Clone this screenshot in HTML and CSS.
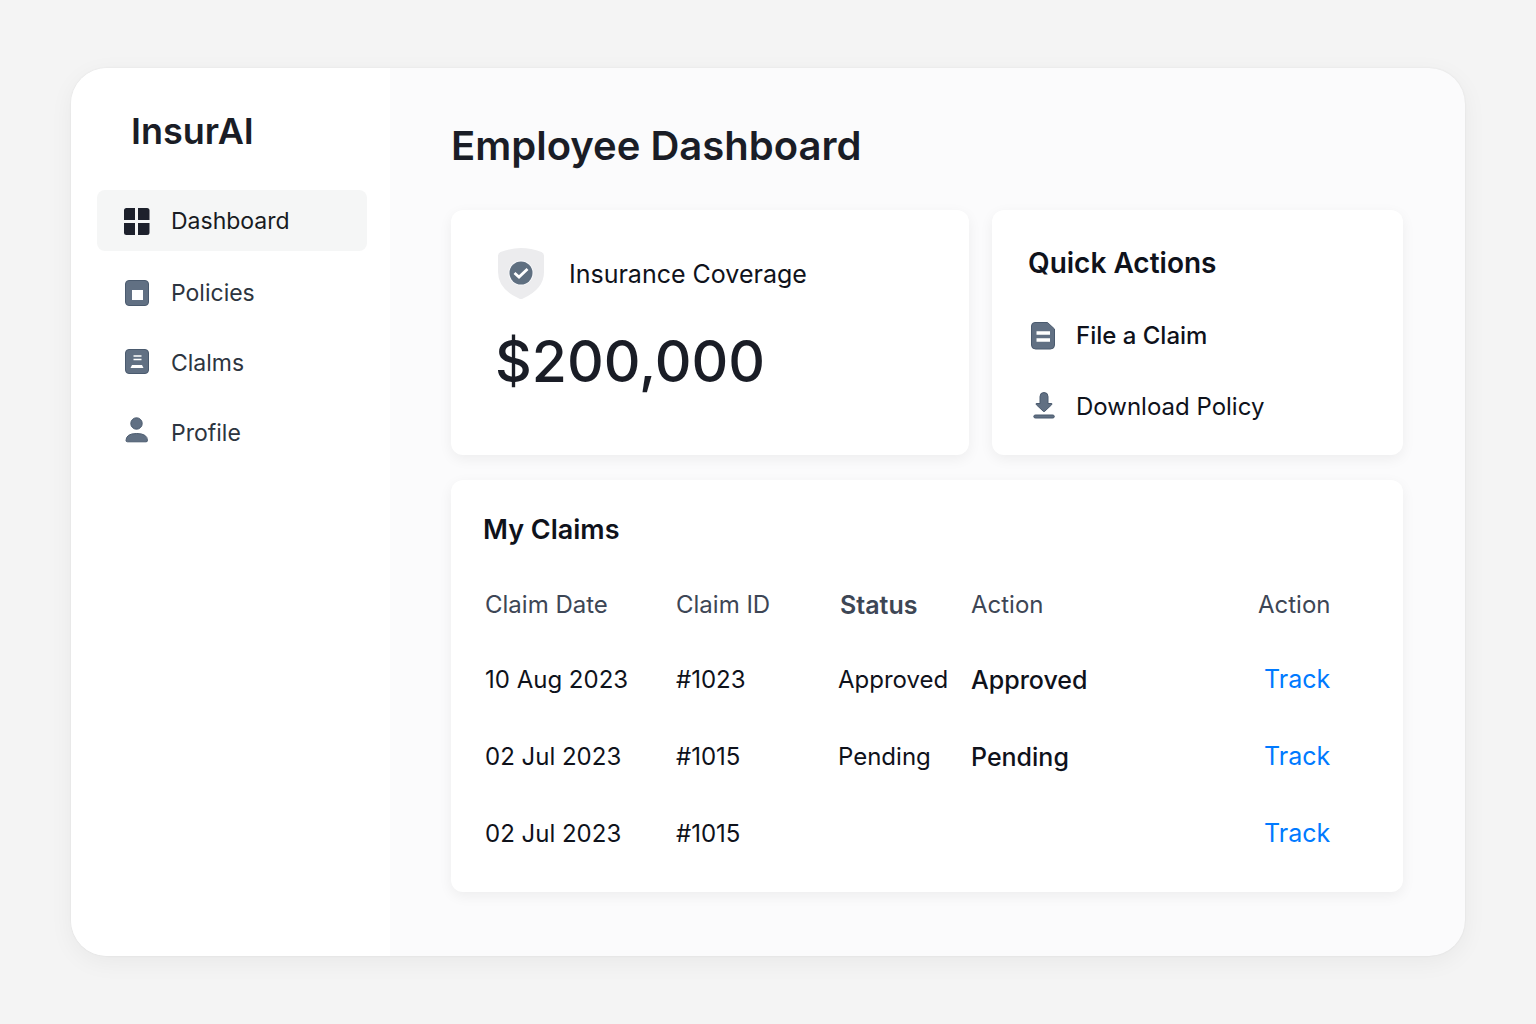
FILE: index.html
```html
<!DOCTYPE html>
<html lang="en">
<head>
<meta charset="utf-8">
<meta name="viewport" content="width=device-width, initial-scale=1">
<title>InsurAI – Employee Dashboard</title>
<link rel="stylesheet" href="styles.css">
</head>
<body>
<div class="app">
  <aside class="sidebar">
    <div class="brand">InsurAI</div>
    <nav class="nav">
      <a class="nav-link active" href="#dashboard">
        <svg class="icon" viewBox="0 0 28 28"><path fill="#1d212c" d="M3.5 1H12v12H1V3.500Q1 1 3.500 1zM15 1h9q2.500 0 2.500 2.500V13H15zM1 16h11v12H3.500Q1 28 1 25.500zM15 16h11.500v9.500q0 2.500-2.500 2.500h-9z"/></svg>
        Dashboard</a>
      <a class="nav-link" href="#policies">
        <svg class="icon" viewBox="0 1 28 28"><rect x="2.500" y="2.500" width="23" height="25" rx="3.500" fill="#617083" stroke="#4a5a6e"/><rect x="9" y="12" width="11" height="10" fill="#fff"/></svg>
        Policies</a>
      <a class="nav-link" href="#claims">
        <svg class="icon" viewBox="0 1 28 28"><rect x="2.500" y="1.500" width="23" height="24" rx="3.500" fill="#617083" stroke="#4a5a6e"/><path d="M10.500 8h8M10.500 11.500h8" stroke="#fff" stroke-width="1.500"/><path d="M9 17h10l1.500 3h-13z" fill="#fff"/></svg>
        Clalms</a>
      <a class="nav-link" href="#profile">
        <svg class="icon" viewBox="0 1 28 28"><g fill="#617083" stroke="#4a5a6e"><circle cx="13.500" cy="5.500" r="5.700"/><path d="M3 22.500q0-7 10.700-7t10.800 7q0 1.300-1.500 1.300H4.500Q3 23.800 3 22.500z"/></g></svg>
        Profile</a>
    </nav>
  </aside>
  <main class="main">
    <h1 class="title">Employee Dashboard</h1>
    <div class="cards">
      <section class="card coverage">
        <div class="coverage-head">
          <svg class="shield" viewBox="0 0 50 52"><path fill="#ececee" d="M26 0Q36 0 46.500 4Q49 5 49 8V24Q49 41 28 50.500Q26 51.500 24 50.500Q3 41 3 24V8Q3 5 5.500 4Q16 0 26 0z"/><circle cx="26" cy="25" r="12.500" fill="#f8f8fa"/><circle cx="26" cy="25" r="11.500" fill="#5f6f80"/><path d="M19.500 25l4.500 4 8.500-8" fill="none" stroke="#fff" stroke-width="2.800"/></svg>
          <h2 class="coverage-label">Insurance Coverage</h2>
        </div>
        <p class="amount">$200,000</p>
      </section>
      <section class="card quick">
        <h2 class="heading">Quick Actions</h2>
        <button class="action strong" type="button">
          <svg class="icon" viewBox="0 0 28 28"><path fill="#617083" stroke="#4a5a6e" d="M7 .5h12.500l7 6.500v16q0 4-4 4H7.500q-4 0-4-4V4q0-3.500 3.500-3.500z"/><path d="M8.500 11H22M8.500 18H22" stroke="#fff" stroke-width="3.600"/></svg>
          File a Claim</button>
        <button class="action" type="button">
          <svg class="icon" viewBox="0 0 28 28"><g fill="#617083" stroke="#4a5a6e" stroke-linejoin="round"><path d="M12 3.500q0-4 4-4t4 4v7h3q1.800 0 .6 1.300L16.500 18.500q-.5.500-1 0L8.400 11.800q-1.200-1.300.6-1.300h3z"/><rect x="5.800" y="22" width="20.500" height="3" rx="1.500"/></g></svg>
          Download Policy</button>
      </section>
    </div>
    <section class="card claims">
      <h2 class="heading">My Claims</h2>
      <table class="table">
        <colgroup><col class="c-date"><col class="c-id"><col class="c-status"><col><col class="c-track"></colgroup>
        <thead><tr><th>Claim Date</th><th>Claim ID</th><th class="semi">Status</th><th>Action</th><th>Action</th></tr></thead>
        <tbody>
          <tr><td>10 Aug 2023</td><td>#1023</td><td>Approved</td><td class="medium">Approved</td><td><a class="track" href="#track-1">Track</a></td></tr>
          <tr><td>02 Jul 2023</td><td>#1015</td><td>Pending</td><td class="medium">Pending</td><td><a class="track" href="#track-2">Track</a></td></tr>
          <tr><td>02 Jul 2023</td><td>#1015</td><td></td><td></td><td><a class="track" href="#track-3">Track</a></td></tr>
        </tbody>
      </table>
    </section>
  </main>
</div>
</body>
</html>
```
FILE: styles.css
```css
* { box-sizing: border-box; }
body {
  margin: 0;
  min-height: 100vh;
  padding: 68px 71px;
  display: flex;
  background: #f4f4f4;
  color: #0f121b;
  font: 400 24px/32px Inter, "Liberation Sans", sans-serif;
}
h1, h2, p { margin: 0; }
.app {
  flex: 1;
  display: flex;
  border-radius: 36px;
  overflow: hidden;
  background: #fbfbfc;
  box-shadow: 0 0 2px rgba(0, 0, 0, .08), 0 6px 24px rgba(0, 0, 0, .05);
}
.sidebar { width: 319px; flex: none; padding: 39px 23px 39px 26px; background: #fff; }
.brand { padding-left: 34px; color: #1a1d26; font-size: 36px; font-weight: 600; line-height: 48px; }
.nav { display: flex; flex-direction: column; gap: 9px; margin-top: 35px; }
.nav-link {
  height: 61px;
  padding: 0 26px;
  display: flex;
  align-items: center;
  gap: 20px;
  border-radius: 8px;
  color: #2d3540;
  font-size: 23px;
  text-decoration: none;
}
.nav-link.active { margin-bottom: 2px; background: #f5f6f6; color: #181b22; }
.icon { width: 28px; height: 28px; flex: none; overflow: visible; }
.main { flex: 1; min-width: 0; padding: 52px 62px 64px 61px; }
.title { color: #1a1d26; font-size: 40px; font-weight: 600; line-height: 52px; }
.cards { display: grid; grid-template-columns: 518fr 411fr; gap: 23px; margin: 38px 0 25px; }
.card { border-radius: 12px; background: #fff; box-shadow: 0 4px 14px rgba(0, 0, 0, .06); }
.coverage { padding: 38px 44px; }
.coverage-head { display: flex; align-items: center; gap: 24px; }
.shield { width: 50px; height: 52px; }
.coverage-label { font-size: 25px; font-weight: 400; }
.amount { margin-top: 24px; color: #1a1d26; font-size: 57px; font-weight: 500; line-height: 76px; }
.heading { font-size: 28px; font-weight: 600; line-height: 36px; }
.quick { padding: 35px 36px 32px; }
.action {
  display: flex;
  align-items: center;
  gap: 20px;
  margin: 39px 0 0;
  padding: 0;
  border: 0;
  background: none;
  color: inherit;
  font: inherit;
}
.action.strong { font-weight: 500; }
.claims { padding: 32px 32px 20px; }
.claims .heading { font-size: 27px; }
.table { width: 100%; margin-top: 21px; border-collapse: collapse; table-layout: fixed; }
.table th, .table td { height: 77px; padding: 0 0 0 2px; text-align: left; font-weight: 400; white-space: nowrap; }
.table th { height: 72px; color: #3d4655; }
.table .semi { padding-left: 4px; font-size: 25px; font-weight: 600; }
.table .medium { font-size: 25px; font-weight: 500; }
.table td:last-child { padding-left: 8px; }
.c-date { width: 191px; }
.c-id { width: 162px; }
.c-status { width: 133px; }
.c-track { width: 115px; }
.track { color: #007aff; font-size: 25px; text-decoration: none; }
```
